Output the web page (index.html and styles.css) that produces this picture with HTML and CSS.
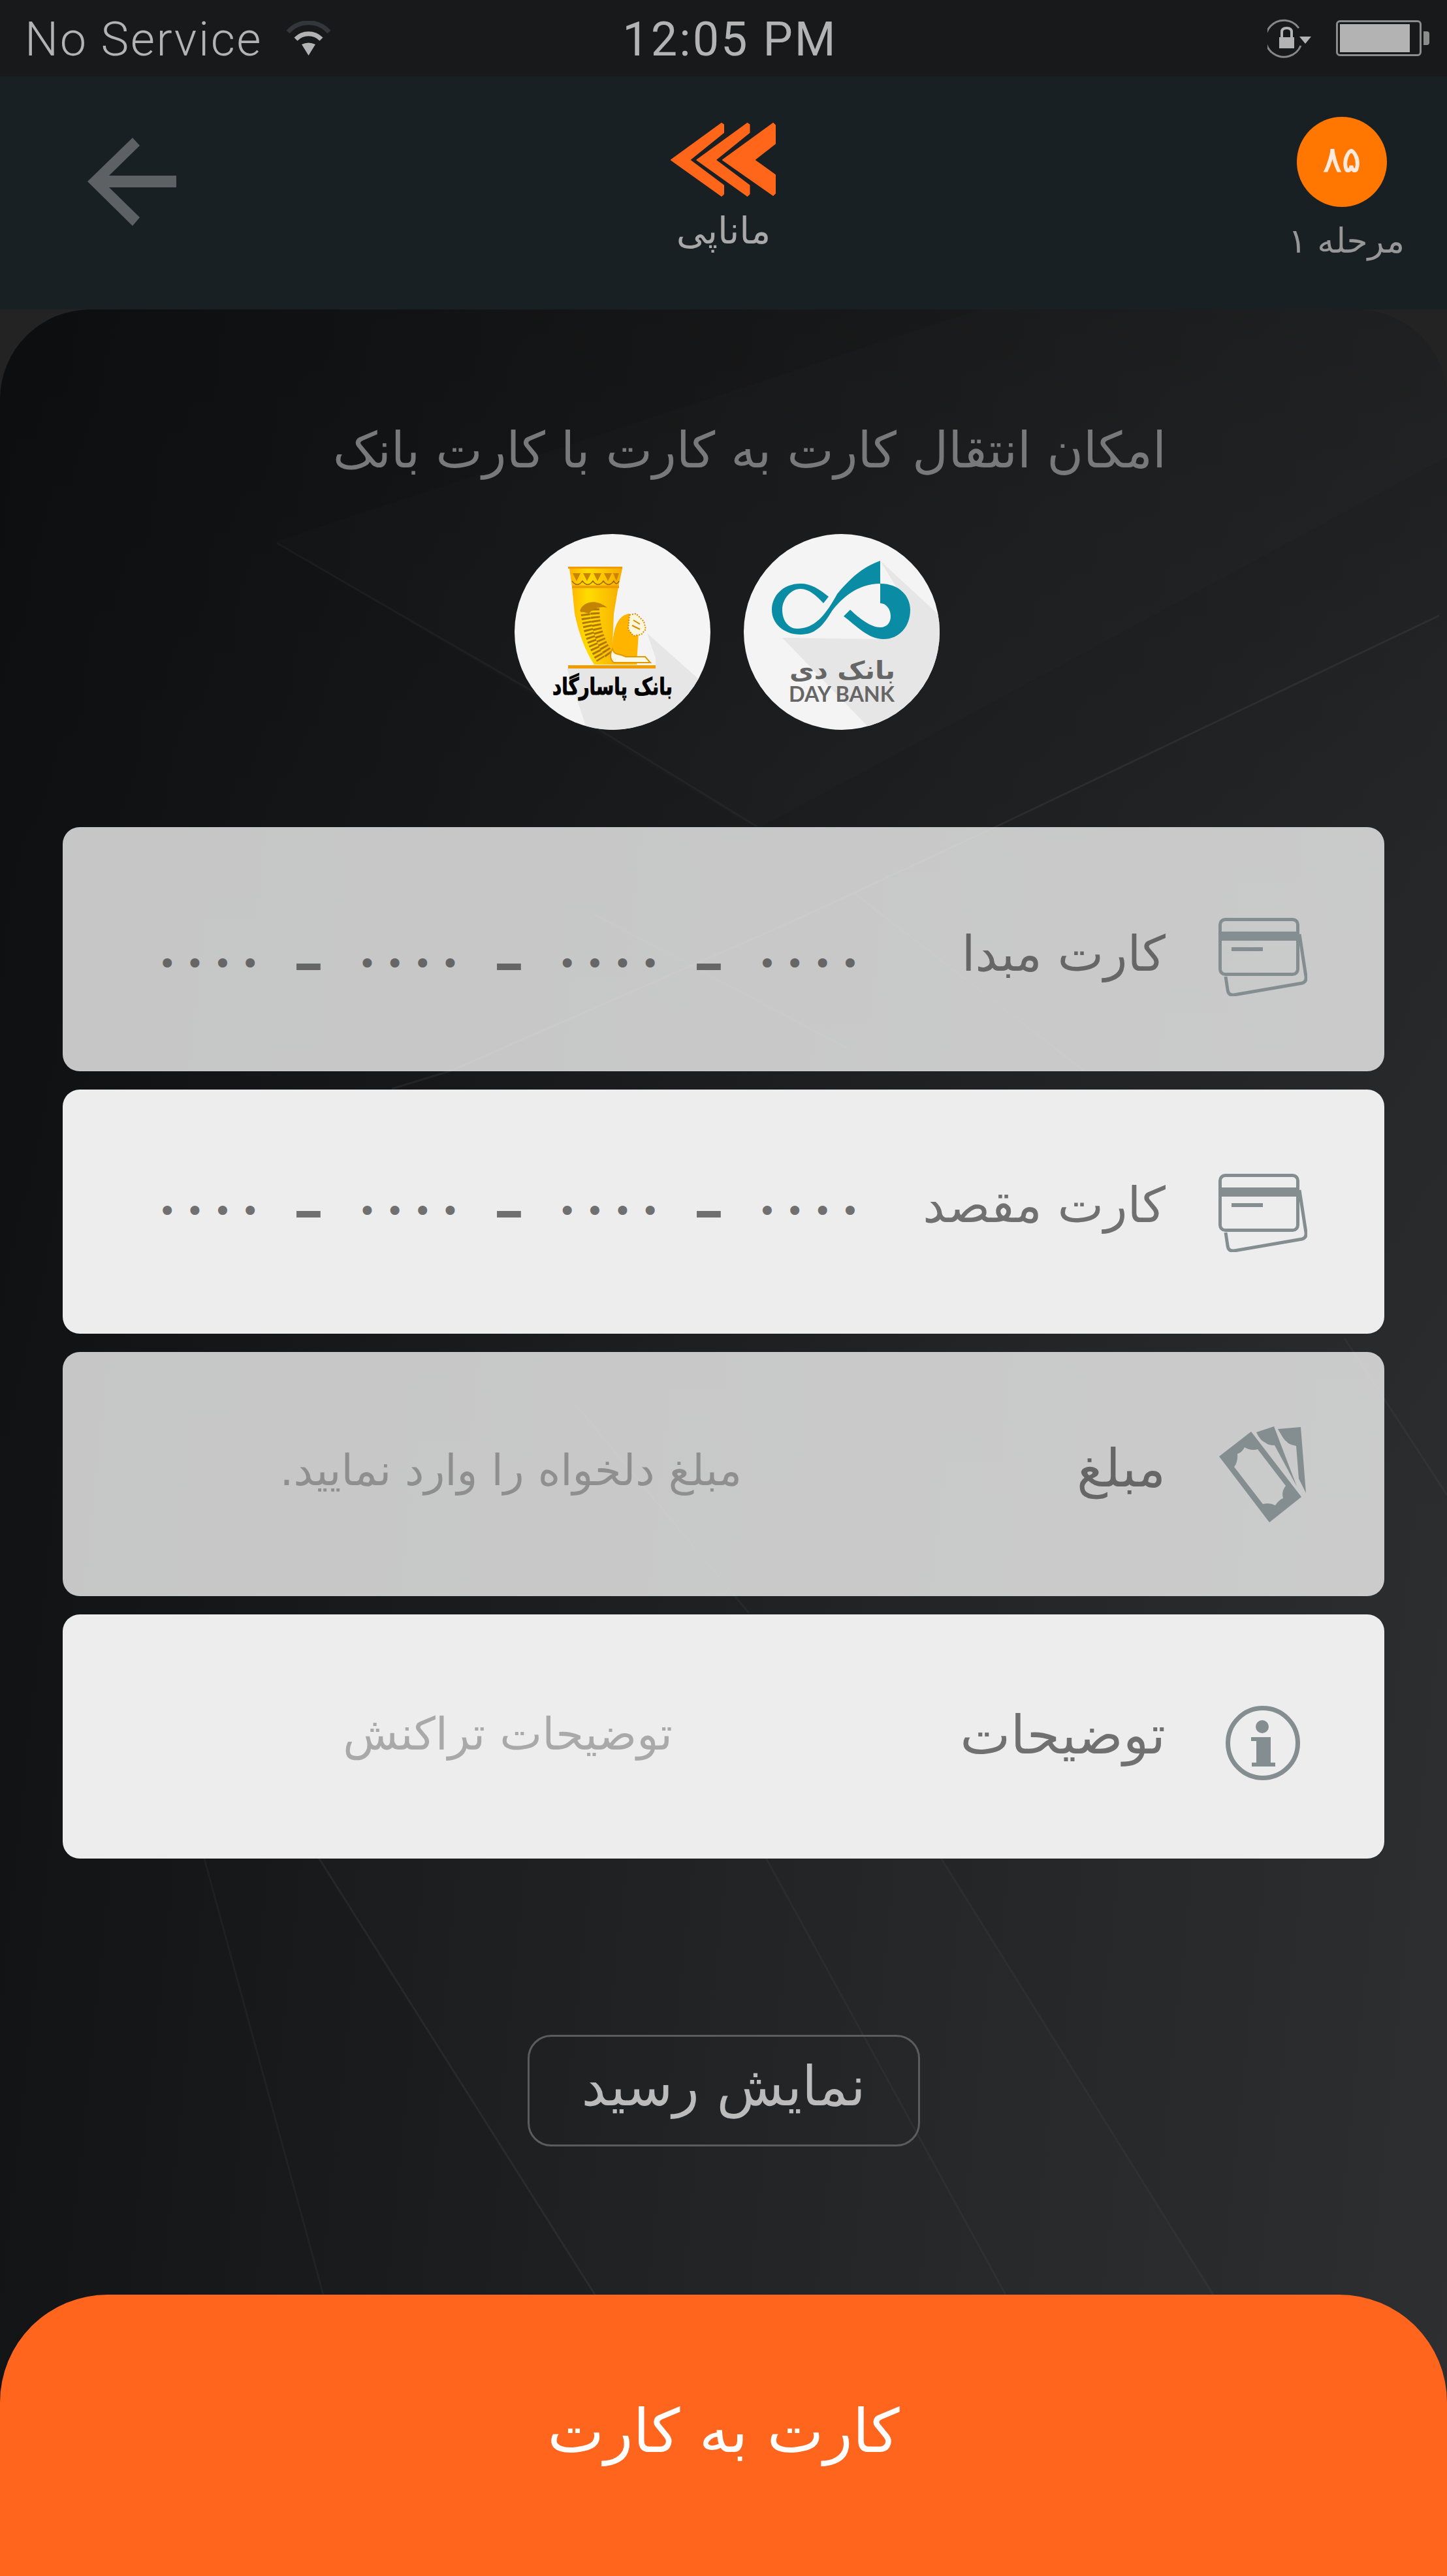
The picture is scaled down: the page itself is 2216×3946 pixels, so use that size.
FILE: index.html
```html
<!DOCTYPE html>
<html lang="fa" dir="rtl">
<head>
<meta charset="utf-8">
<title>ماناپی</title>
<link rel="stylesheet" href="styles.css">
</head>
<body>
<div class="screen">
  <header class="status" dir="ltr">
    <div class="status-left">
      <span class="status-text">No Service</span>
      <svg class="wifi" viewBox="0 0 69 53"><path d="M3 17C20 -2 49 -2 66 17" class="wifi-dim"/><path d="M15 28C26 17 43 17 54 28" class="wifi-on"/><path d="M24 36Q34.500 31 45 36L34.500 53Z" class="wifi-fill"/></svg>
    </div>
    <span class="status-time">12:05 PM</span>
    <div class="status-right">
      <svg class="lock" viewBox="0 0 68 60"><path d="M48 14A28 28 0 1 0 51 41" class="lock-ring"/><rect x="18" y="28" width="23" height="17" class="lock-fill"/><path d="M22 29V20Q22 14 29.500 14Q37 14 37 20V29" class="lock-shackle"/><path d="M49 27H67L58 38Z" class="lock-fill"/></svg>
      <div class="battery"><div class="battery-fill"></div></div>
      <div class="battery-tip"></div>
    </div>
  </header>

  <nav class="nav">
    <div class="step">
      <div class="step-badge">۸۵</div>
      <div class="step-label">مرحله ۱</div>
    </div>
    <div class="brand">
      <svg class="brand-logo" viewBox="-2 -2 164 116">
        <path d="M0 56L77 0L80 2V14L28 56L80 95V108L77 111Z"/>
        <path d="M39.500 56L116.500 0L119.500 2V14L67.500 56L119.500 95V108L116.500 111Z"/>
        <path d="M79 56L156 0L159 3V31L127 56L159 79V107L156 110Z"/>
      </svg>
      <div class="brand-name">ماناپی</div>
    </div>
    <div class="back">
      <svg class="back-icon" viewBox="0 0 136 135"><path d="M0 67L69 0L80 12L33 58H136V76H33L80 122L69 135Z"/></svg>
    </div>
  </nav>

  <main class="panel">
    <svg class="panel-art" viewBox="0 474 2216 3472" preserveAspectRatio="none" aria-hidden="true">
      <path class="art-shape" d="M420 830L1160 1270L2216 700V474H1500Z"/>
      <path class="art-shape2" d="M488 2846L911 3515H1858L1441 2846Z"/>
      <path class="art-line" d="M424 832L918 1118L1159 1266"/>
      <path class="art-line" d="M909 1400L1300 1607"/>
      <path class="art-line strong" d="M2204 943L1526 1266L1217 1410L691 1640L600 1668"/>
      <path class="art-line" d="M1308 1368L1660 1640"/>
      <path class="art-line" d="M880 2150L1147 2471"/>
      <path class="art-line" d="M2059 2050L2216 2290"/>
      <path class="art-line" d="M311 2840L495 3515"/>
      <path class="art-line strong" d="M488 2846L911 3515"/>
      <path class="art-line" d="M1173 2846L1540 3515"/>
      <path class="art-line" d="M1441 2846L1858 3515"/>
    </svg>

    <h1 class="title">امکان انتقال کارت به کارت با کارت بانک</h1>

    <div class="banks">
      <svg class="bank" viewBox="0 0 300 300">
        <defs><clipPath id="clipA"><circle cx="150" cy="150" r="150"/></clipPath></defs>
        <circle cx="150" cy="150" r="150" class="bank-bg"/>
        <path clip-path="url(#clipA)" class="bank-shadow" d="M209 41L300 125V300H195L59 159L214 161L255 116Z"/>
        <path class="day-teal" d="M130 96C115 84 103 76 87 76C60 76 43 95 43 116C43 138 62 154 87 154C110 154 122 140 135 118C150 98 175 76 209 76V41C185 50 168 62 143 92C125 125 108 145 82 145C68 145 59 132 59 116C59 100 72 84 87 84C100 84 112 95 122 106Z"/>
        <path class="day-teal" d="M209 76C238 76 255 95 255 116C255 142 238 161 214 161C190 161 172 140 153 126L163 116C178 130 195 143 209 143C220 143 225 135 225 126C225 115 218 106 209 106Z"/>
        <text class="day-fa" x="151" y="222" text-anchor="middle" textLength="162" lengthAdjust="spacingAndGlyphs">بانک دی</text>
        <text class="day-en" x="150" y="257" text-anchor="middle" textLength="162" lengthAdjust="spacingAndGlyphs" dir="ltr">DAY BANK</text>
      </svg>
      <svg class="bank" viewBox="0 0 300 300">
        <defs>
          <clipPath id="clipB"><circle cx="150" cy="150" r="150"/></clipPath>
          <linearGradient id="gold" x1="0" x2="1" y1="0" y2="0"><stop offset="0" stop-color="#ffb300"/><stop offset=".35" stop-color="#ffdc00"/><stop offset="1" stop-color="#f7ab00"/></linearGradient>
        </defs>
        <circle cx="150" cy="150" r="150" class="bank-bg"/>
        <path clip-path="url(#clipB)" class="bank-shadow" d="M203 152L285 225L300 300H111L80 206H216V190Z"/>
        <path fill="url(#gold)" d="M84 53H165L159 81L152 122L150 170V200H122C108 180 98 150 92 122L88 81Z"/>
        <path class="pg-lion" d="M150 168C152 140 160 124 176 122L190 150L187 200H150Z"/>
        <path class="pg-band" d="M82 50H165V53H82ZM88 79H160V83H88Z"/>
        <g class="pg-frieze">
          <path d="M89 60l6 12 6-12zM105 60l6 12 6-12zM121 60l6 12 6-12zM137 60l6 12 6-12zM151 60l5 12 4-12z"/>
          <path class="pg-swag" d="M88 72Q96 83 104 72Q112 83 120 72Q128 83 136 72Q144 83 152 72Q156 80 160 72"/>
        </g>
        <path class="pg-feather" d="M108 116Q112 160 132 192"/>
        <path class="pg-feather" d="M123 114Q124 158 146 186"/>
        <path class="pg-crest" d="M100 118C104 104 124 98 142 113C132 110 120 114 114 122Z"/>
        <path class="pg-mane" d="M176 124L186 122L198 134L201 146L194 154L182 156L174 146Z"/>
        <path class="pg-face" d="M182 132L192 138M180 140L192 146"/>
        <path class="pg-leg" d="M150 176C154 188 158 181 170 188L200 188L208 197H152C146 192 146 184 150 176Z"/>
        <path class="pg-band" d="M82 201H216V206H82Z"/>
        <text class="pg-name" x="150" y="246" text-anchor="middle" textLength="184" lengthAdjust="spacingAndGlyphs">بانک پاسارگاد</text>
      </svg>
    </div>

    <section class="cards">
      <div class="card card-dim card-source">
        <svg class="card-icon" viewBox="0 0 136 120"><path class="ic-line" d="M11 90L14 110Q15 119 24 118L128 100Q135 98 134 90L124 25"/><rect class="ic-line" x="2.500" y="2.500" width="119" height="84" rx="8"/><path class="ic-fill" d="M3 21H122V35H3ZM20 45H68V51H20Z"/></svg>
        <div class="card-label">کارت مبدا</div>
        <div class="mask" dir="ltr"><span class="mask-dots">••••</span><span class="mask-dash">–</span><span class="mask-dots">••••</span><span class="mask-dash">–</span><span class="mask-dots">••••</span><span class="mask-dash">–</span><span class="mask-dots">••••</span></div>
      </div>
      <div class="card card-target">
        <svg class="card-icon" viewBox="0 0 136 120"><path class="ic-line" d="M11 90L14 110Q15 119 24 118L128 100Q135 98 134 90L124 25"/><rect class="ic-line" x="2.500" y="2.500" width="119" height="84" rx="8"/><path class="ic-fill" d="M3 21H122V35H3ZM20 45H68V51H20Z"/></svg>
        <div class="card-label">کارت مقصد</div>
        <div class="mask" dir="ltr"><span class="mask-dots">••••</span><span class="mask-dash">–</span><span class="mask-dots">••••</span><span class="mask-dash">–</span><span class="mask-dots">••••</span><span class="mask-dash">–</span><span class="mask-dots">••••</span></div>
      </div>
      <div class="card card-dim card-amount">
        <svg class="card-icon money" viewBox="0 0 136 147"><path class="ic-fill" fill-rule="evenodd" d="M1 46L50 8L127 108L78 147ZM24 62Q30 55 29 42Q36 40 40 32Q50 38 60 35L103 91Q96 100 99 110Q92 113 87 121Q78 116 68 119Z"/><path class="ic-fill" d="M58 9L85 0L120 92L86 29Q76 29 72 25Q64 22 58 9Z"/><path class="ic-fill" d="M91 4L126 1L134 102L123 80L119 30Q105 28 98 16Z"/></svg>
        <div class="card-label">مبلغ</div>
        <div class="hint hint-amount">مبلغ دلخواه را وارد نمایید.</div>
      </div>
      <div class="card card-note">
        <svg class="card-icon info" viewBox="0 0 116 116"><circle class="ic-ring" cx="58" cy="58" r="53.500"/><circle class="ic-fill" cx="57" cy="33" r="10"/><path class="ic-fill" d="M40 49H70V88H77V94H41V88H48V55H40Z"/></svg>
        <div class="card-label">توضیحات</div>
        <div class="hint hint-note">توضیحات تراکنش</div>
      </div>
    </section>

    <button class="receipt" type="button">نمایش رسید</button>

    <button class="cta" type="button">کارت به کارت</button>
  </main>
</div>
</body>
</html>
```

FILE: styles.css
```css
* { box-sizing: border-box; }
html, body { margin: 0; padding: 0; background: #222; }
body { font-family: "DejaVu Sans", "Noto Sans", sans-serif; }

.screen {
  width: 2216px;
  height: 3946px;
  display: flex;
  flex-direction: column;
  overflow: hidden;
  background: #232323;
}

/* status bar */
.status {
  height: 117px;
  flex: none;
  background: #17191b;
  color: #b3b3b3;
  display: grid;
  grid-template-columns: 1fr auto 1fr;
  align-items: center;
  padding: 5px 27px 0 38px;
  font-family: Roboto, "Liberation Sans", sans-serif;
  font-weight: 300;
  font-size: 72px;
  line-height: 100px;
}
.status-left { display: flex; align-items: center; gap: 36px; }
.status-text { letter-spacing: 2.500px; }
.status-time { font-weight: 400; letter-spacing: 3px; margin-left: 9px; }
.status-right { display: flex; align-items: center; justify-content: flex-end; margin-top: -5px; }
.wifi { width: 69px; height: 53px; margin-top: -5px; }
.wifi-dim { fill: none; stroke: #33363a; stroke-width: 7; }
.wifi-on { fill: none; stroke: #b3b3b3; stroke-width: 7; }
.wifi-fill { fill: #b3b3b3; }
.lock { width: 68px; height: 60px; margin-right: 37px; }
.lock-ring { fill: none; stroke: #888; stroke-width: 3; }
.lock-fill { fill: #b3b3b3; }
.lock-shackle { fill: none; stroke: #b3b3b3; stroke-width: 4; }
.battery {
  width: 131px;
  height: 55px;
  border: 3px solid #8c8c8c;
  border-radius: 6px;
  padding: 3px 15px 3px 3px;
}
.battery-fill { height: 100%; background: #b3b3b3; }
.battery-tip { width: 9px; height: 21px; background: #8c8c8c; border-radius: 0 4px 4px 0; margin-left: 3px; }

/* nav */
.nav {
  height: 357px;
  flex: none;
  background: #192023;
  display: grid;
  grid-template-columns: 1fr auto 1fr;
  align-items: start;
}
.step {
  justify-self: start;
  width: 170px;
  margin-right: 69px;
  padding-top: 62px;
  display: flex;
  flex-direction: column;
  align-items: center;
}
.step-badge {
  width: 138px;
  height: 138px;
  margin-right: 14px;
  border-radius: 50%;
  background: #ff7600;
  color: #ffe9dc;
  font-size: 54px;
  font-weight: 400;
  -webkit-text-stroke: 1px #ffe9dc;
  line-height: 132px;
  text-align: center;
}
.step-label { font-size: 52px; line-height: 60px; margin-top: 22px; color: #979797; white-space: nowrap; }
.brand { display: flex; flex-direction: column; align-items: center; padding-top: 70px; }
.brand-logo { width: 164px; height: 116px; fill: #ff661a; stroke: #ff661a; stroke-width: 2; stroke-linejoin: round; display: block; }
.brand-name { font-size: 57px; line-height: 72px; margin-top: 14px; color: #a8a8a8; }
.back { justify-self: end; padding: 94px 0 0; margin-left: 134px; }
.back-icon { display: block; width: 136px; height: 135px; fill: #5d6164; }

/* panel */
.panel {
  position: relative;
  flex: 1;
  display: flex;
  flex-direction: column;
  border-radius: 138px 138px 0 0;
  background:
    linear-gradient(180deg, rgba(10, 10, 11, .4) 0, rgba(10, 10, 11, .15) 25%, rgba(10, 10, 11, 0) 55%),
    linear-gradient(96deg, #0e1011 0, #191a1b 30%, #242526 65%, #2e2f30 100%);
  overflow: hidden;
}
.panel-art { position: absolute; inset: 0; width: 100%; height: 100%; pointer-events: none; }
.art-shape { fill: rgba(255, 255, 255, .01); }
.art-shape2 { fill: rgba(255, 255, 255, .012); }
.art-line { fill: none; stroke: rgba(255, 255, 255, .035); stroke-width: 3; }
.art-line.strong { stroke: rgba(255, 255, 255, .055); }

.title {
  position: relative;
  margin: 166px 0 0;
  padding-right: 430px;
  font-size: 76px;
  font-weight: 400;
  line-height: 100px;
  height: 100px;
  color: #77797a;
  white-space: nowrap;
}

.banks {
  position: relative;
  display: flex;
  justify-content: center;
  gap: 51px;
  margin: 78px 0 0;
  padding-left: 10px;
}
.bank { width: 300px; height: 300px; display: block; flex: none; }
.bank-bg { fill: #f4f4f4; }
.bank-shadow { fill: #e6e6e6; }
.day-teal { fill: #0a8ca5; }
.day-fa { font-size: 38px; font-weight: 700; fill: #666; }
.day-en { font-family: Lato, "Open Sans", sans-serif; font-size: 32px; font-weight: 700; fill: #666; direction: ltr; }
.pg-lion { fill: #ffb400; }
.pg-band { fill: #f09c00; }
.pg-frieze { fill: #c98500; }
.pg-swag { fill: none; stroke: #9a6a00; stroke-width: 1.500; }
.pg-feather { fill: none; stroke: #b27600; stroke-width: 14; stroke-dasharray: 3 3; }
.pg-crest { fill: #c48300; }
.pg-mane { fill: #fff6dc; stroke: #d68a00; stroke-width: 2; stroke-dasharray: 2 2; }
.pg-face { fill: none; stroke: #d68a00; stroke-width: 2; }
.pg-leg { fill: #fff8e6; stroke: #e09a00; stroke-width: 2; }
.pg-name { font-size: 36px; font-weight: 700; fill: #000; stroke: #000; stroke-width: 1; }

/* cards */
.cards {
  position: relative;
  display: flex;
  flex-direction: column;
  gap: 28px;
  margin: 149px 96px 0;
}
.card {
  height: 374px;
  border-radius: 26px;
  background: rgba(240, 240, 241, .99);
  display: grid;
  grid-template-columns: 136px 385px 1fr;
  align-items: center;
  padding-right: 118px;
  color: #707070;
}
.card-dim { background: rgba(240, 240, 240, .81); color: #666; }
.card-source { padding-top: 24px; }
.card-source .mask { padding-top: 19px; }
.card-source .card-label { padding-bottom: 10px; }
.card-target { padding-top: 4px; }
.card-target .mask { padding-bottom: 6px; }
.card-target .card-label { padding-bottom: 24px; }
.card-amount .card-label { padding-bottom: 16px; font-size: 80px; }
.card-note { padding-top: 6px; }
.card-note .card-label { padding-bottom: 10px; font-size: 82px; }
.card-icon { width: 136px; height: 120px; display: block; fill: none; }
.card-icon.money { height: 147px; }
.card-icon.info { width: 116px; height: 116px; margin: 14px 10px 0; }
.ic-line { fill: none; stroke: #848e90; stroke-width: 5; }
.ic-fill { fill: #848e90; }
.ic-ring { fill: none; stroke: #848e90; stroke-width: 7; }
.card-label { font-size: 75px; line-height: 90px; padding-right: 81px; white-space: nowrap; }
.mask {
  display: flex;
  align-items: center;
  justify-content: flex-end;
  gap: 56px;
  padding-right: 165px;
  font-size: 48px;
  line-height: 60px;
}
.mask-dots { letter-spacing: 14px; margin-right: -14px; }
.mask-dash { font-size: 78px; font-weight: 700; line-height: 60px; transform: scaleX(1.200); }
.hint { line-height: 80px; white-space: nowrap; }
.hint-amount { font-size: 66px; color: #8f8f8f; padding-right: 345px; padding-bottom: 10px; }
.hint-note { font-size: 69px; color: #a9a9a9; padding-right: 451px; padding-bottom: 14px; }

/* buttons */
.receipt {
  position: relative;
  align-self: center;
  width: 601px;
  height: 171px;
  margin-top: 270px;
  border: 3px solid #5b5c5d;
  border-radius: 36px;
  background: transparent;
  color: #bbb;
  font-family: inherit;
  font-size: 84px;
  line-height: 1;
  padding: 0 0 14px;
}
.cta {
  position: relative;
  margin-top: auto;
  height: 431px;
  border: 0;
  border-radius: 165px 165px 0 0;
  background: #ff651c;
  color: #fff;
  font-family: inherit;
  font-size: 92px;
  padding: 0 0 12px;
}
```
